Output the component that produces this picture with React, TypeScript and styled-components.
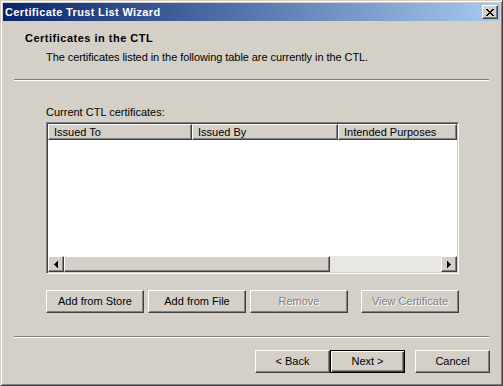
import React from "react";
import styled, { createGlobalStyle, css } from "styled-components";

const Global = createGlobalStyle`
  html, body { margin: 0; padding: 0; background: #d4d0c8; }
  * { box-sizing: border-box; }
  body { font-family: Tahoma, "Liberation Sans", Arial, sans-serif; font-size: 11px; color: #000; }
`;

const FACE = "#d4d0c8";

const Window = styled.div`
  width: 503px;
  height: 386px;
  background: ${FACE};
  border: 1px solid;
  border-color: ${FACE} #404040 #404040 ${FACE};
  box-shadow: inset 1px 1px #fff, inset -1px -1px #808080;
  padding: 2px;
  display: flex;
  flex-direction: column;
`;

const TitleBar = styled.div`
  height: 18px;
  flex: none;
  display: flex;
  align-items: center;
  justify-content: space-between;
  padding: 0 2px 0 2px;
  background: linear-gradient(to right, #0a246a, #a6caf0);
`;

const TitleText = styled.span`
  color: #fff;
  font-weight: bold;
  font-size: 11px;
  line-height: 13px;
  letter-spacing: 0.35px;
`;

const raised = css`
  background: ${FACE};
  border: 1px solid;
  border-color: #fff #404040 #404040 #fff;
  box-shadow: inset -1px -1px #808080;
`;

const CloseButton = styled.div`
  ${raised};
  width: 16px;
  height: 14px;
  display: flex;
  align-items: center;
  justify-content: center;
  padding-right: 1px;
`;

const Header = styled.div`
  height: 58px;
  flex: none;
  padding: 11px 0 0 22px;
`;

const HeaderTitle = styled.div`
  font-weight: bold;
  line-height: 13px;
  letter-spacing: 0.5px;
`;

const HeaderSub = styled.div`
  margin: 6px 0 0 21px;
  line-height: 13px;
  letter-spacing: -0.07px;
`;

const Separator = styled.div`
  flex: none;
  height: 2px;
  margin: 0 11px;
  border-top: 1px solid #808080;
  border-bottom: 1px solid #fff;
`;

const Content = styled.div`
  flex: none;
  padding: 25px 0 0 43px;
  width: 456px;
  height: 255px;
  display: flex;
  flex-direction: column;
`;

const Label = styled.div`
  line-height: 13px;
  margin-bottom: 3px;
`;

const ListView = styled.div`
  width: 413px;
  height: 152px;
  border: 1px solid;
  border-color: #808080 #fff #fff #808080;
  box-shadow: inset 1px 1px #404040, inset -1px -1px ${FACE};
  padding: 1px;
  display: flex;
  flex-direction: column;
  background: #fff;
`;

const HeaderRow = styled.div`
  display: flex;
  height: 16px;
  flex: none;
  overflow: hidden;
`;

const HeaderCell = styled.div<{ $w?: number }>`
  ${raised};
  flex: ${(p) => (p.$w ? `0 0 ${p.$w}px` : "1 1 auto")};
  height: 16px;
  line-height: 13px;
  padding: 1px 0 0 5px;
  white-space: nowrap;
  overflow: hidden;
`;

const ListBody = styled.div`
  flex: 1;
  background: #fff;
`;

const HScroll = styled.div`
  flex: none;
  height: 16px;
  display: flex;
  background: #e9e7e3;
`;

const ArrowButton = styled.div`
  ${raised};
  width: 16px;
  height: 16px;
  flex: none;
  display: flex;
  align-items: center;
  justify-content: center;
`;

const Thumb = styled.div<{ $w: number }>`
  ${raised};
  width: ${(p) => p.$w}px;
  height: 16px;
  flex: none;
`;

const Track = styled.div`
  flex: 1;
`;

const ButtonRow = styled.div`
  display: flex;
  width: 413px;
  margin-top: 16px;
  gap: 4px;
`;

const Spacer = styled.div`
  flex: 1;
`;

const Button = styled.div<{ $w: number; $disabled?: boolean; $default?: boolean }>`
  ${raised};
  width: ${(p) => p.$w}px;
  height: 23px;
  flex: none;
  display: flex;
  align-items: center;
  justify-content: center;
  line-height: 13px;
  white-space: nowrap;
  ${(p) =>
    p.$disabled &&
    css`
      color: #808080;
      text-shadow: 1px 1px #fff;
    `}
  ${(p) =>
    p.$default &&
    css`
      border: 1px solid #000;
      box-shadow: inset 1px 1px #fff, inset -1px -1px #404040, inset -2px -2px #808080;
    `}
`;

const Footer = styled.div`
  flex: none;
  display: flex;
  justify-content: flex-end;
  padding: 12px 10px 0 0;
`;

const FooterGap = styled.div<{ $w: number }>`
  width: ${(p) => p.$w}px;
  flex: none;
`;

const CloseIcon = () => (
  <svg width="8" height="7" viewBox="0 0 8 7" shapeRendering="crispEdges">
    <path
      d="M0 0h2v1h-2zM6 0h2v1h-2zM1 1h2v1h-2zM5 1h2v1h-2zM2 2h4v1h-4zM3 3h2v1h-2zM2 4h4v1h-4zM1 5h2v1h-2zM5 5h2v1h-2zM0 6h2v1h-2zM6 6h2v1h-2z"
      fill="#000"
    />
  </svg>
);

const LeftArrow = () => (
  <svg width="4" height="7" viewBox="0 0 4 7" shapeRendering="crispEdges">
    <path d="M3 0h1v7h-1zM2 1h1v5h-1zM1 2h1v3h-1zM0 3h1v1h-1z" fill="#000" />
  </svg>
);

const RightArrow = () => (
  <svg width="4" height="7" viewBox="0 0 4 7" shapeRendering="crispEdges">
    <path d="M0 0h1v7h-1zM1 1h1v5h-1zM2 2h1v3h-1zM3 3h1v1h-1z" fill="#000" />
  </svg>
);

export default function App() {
  return (
    <>
      <Global />
      <Window>
        <TitleBar>
          <TitleText>Certificate Trust List Wizard</TitleText>
          <CloseButton>
            <CloseIcon />
          </CloseButton>
        </TitleBar>
        <Header>
          <HeaderTitle>Certificates in the CTL</HeaderTitle>
          <HeaderSub>The certificates listed in the following table are currently in the CTL.</HeaderSub>
        </Header>
        <Separator />
        <Content>
          <Label>Current CTL certificates:</Label>
          <ListView>
            <HeaderRow>
              <HeaderCell $w={144}>Issued To</HeaderCell>
              <HeaderCell $w={146}>Issued By</HeaderCell>
              <HeaderCell>Intended Purposes</HeaderCell>
            </HeaderRow>
            <ListBody />
            <HScroll>
              <ArrowButton>
                <LeftArrow />
              </ArrowButton>
              <Thumb $w={266} />
              <Track />
              <ArrowButton>
                <RightArrow />
              </ArrowButton>
            </HScroll>
          </ListView>
          <ButtonRow>
            <Button $w={98}>Add from Store</Button>
            <Button $w={98}>Add from File</Button>
            <Button $w={98} $disabled>Remove</Button>
            <Spacer />
            <Button $w={98} $disabled>View Certificate</Button>
          </ButtonRow>
        </Content>
        <Separator />
        <Footer>
          <Button $w={75}>&lt; Back</Button>
          <Button $w={75} $default>Next &gt;</Button>
          <FooterGap $w={10} />
          <Button $w={75}>Cancel</Button>
        </Footer>
      </Window>
    </>
  );
}
